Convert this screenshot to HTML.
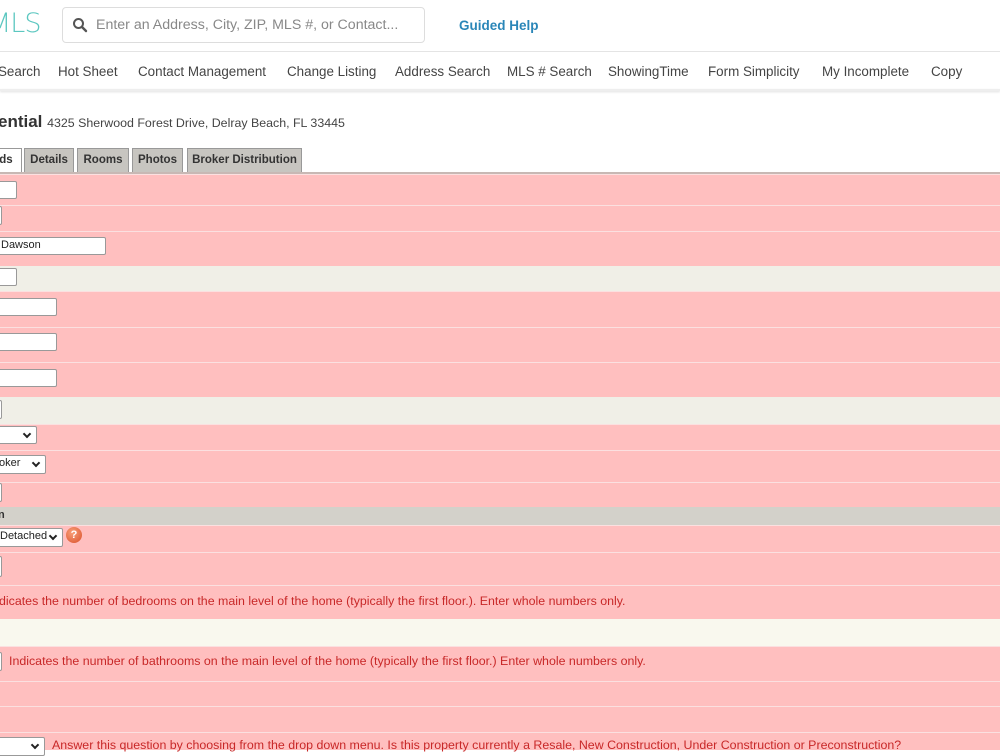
<!DOCTYPE html>
<html><head><style>
body{margin:0;width:1000px;height:750px;overflow:hidden;background:#fff;font-family:"Liberation Sans",sans-serif;position:relative}
.a{position:absolute}
.nav{font-family:"Liberation Sans",sans-serif;font-size:13.4px;color:#444;top:64px}
.row{position:absolute;left:0;width:1000px;background:#ffbfbf;border-top:1px solid #fbe0e0;box-sizing:border-box}
.inp{position:absolute;left:-4px;background:#fff;border:1px solid #999;border-radius:2px;box-sizing:border-box;font-size:11px;font-family:"Liberation Sans",sans-serif;color:#222;line-height:15px}
.sel:after{content:"";position:absolute;right:6px;top:4px;width:4px;height:4px;border-right:2px solid #222;border-bottom:2px solid #222;transform:rotate(45deg)}
.red{position:absolute;color:#c82828;font-size:12.4px}
.tab{position:absolute;top:148px;height:24px;background:#c7c5c0;border:1px solid #999;border-bottom:none;box-sizing:border-box;font-size:11.5px;font-weight:bold;color:#333;line-height:22px;text-align:center}
</style></head><body>
<div class="a" style="left:-12px;top:8px;font-family:'DejaVu Sans',sans-serif;font-size:27px;font-weight:200;color:#5cc7c0;letter-spacing:-1px">MLS</div>
<div class="a" style="left:62px;top:7px;width:363px;height:36px;border:1px solid #ddd;border-radius:4px;box-sizing:border-box"></div>
<svg class="a" style="left:72px;top:17px" width="16" height="16" viewBox="0 0 16 16"><circle cx="6.5" cy="6.5" r="4.5" fill="none" stroke="#555" stroke-width="2"/><path d="M10 10l4 4" stroke="#555" stroke-width="2.4" stroke-linecap="round"/></svg>
<div class="a" style="left:96px;top:17px;font-family:'Liberation Sans',sans-serif;font-size:14.2px;color:#888">Enter an Address, City, ZIP, MLS #, or Contact...</div>
<div class="a" style="left:459px;top:18px;font-family:'Liberation Sans',sans-serif;font-size:13.5px;font-weight:bold;color:#2a86b8">Guided Help</div>
<div class="a" style="left:0;top:51px;width:1000px;height:1px;background:#e4e4e4"></div>
<div class="a" style="left:0;top:89px;width:1000px;height:2px;background:#eee;box-shadow:0 1px 2px #ddd"></div>
<div class="a nav" style="left:-2px">Search</div>
<div class="a nav" style="left:58px">Hot Sheet</div>
<div class="a nav" style="left:138px">Contact Management</div>
<div class="a nav" style="left:287px">Change Listing</div>
<div class="a nav" style="left:395px">Address Search</div>
<div class="a nav" style="left:507px">MLS # Search</div>
<div class="a nav" style="left:608px">ShowingTime</div>
<div class="a nav" style="left:708px">Form Simplicity</div>
<div class="a nav" style="left:822px">My Incomplete</div>
<div class="a nav" style="left:931px">Copy</div>
<div class="a" style="left:-2px;top:112px;font-size:17px;font-weight:bold;color:#333">ential <span style="font-size:12.4px;font-weight:normal;color:#444">4325 Sherwood Forest Drive, Delray Beach, FL 33445</span></div>
<div class="tab" style="left:-10px;width:32px;background:#fff">ds</div>
<div class="tab" style="left:24px;width:50px">Details</div>
<div class="tab" style="left:77px;width:52px">Rooms</div>
<div class="tab" style="left:132px;width:51px">Photos</div>
<div class="tab" style="left:187px;width:115px">Broker Distribution</div>
<div class="a" style="left:0;top:172px;width:1000px;height:2px;background:#c8b8b4"></div>

<div class="row" style="top:174px;height:31px"></div><div class="inp" style="top:181px;width:21px;height:18px"></div>
<div class="row" style="top:205px;height:26px"></div><div class="inp" style="top:206px;width:6px;height:19px"></div>
<div class="row" style="top:231px;height:35px"></div><div class="inp" style="top:237px;width:110px;height:18px;padding-left:4px">Dawson</div>
<div class="row" style="top:266px;height:25px;background:#f0efe7;border-top:none"></div><div class="inp" style="top:268px;width:21px;height:18px"></div>
<div class="row" style="top:291px;height:36px"></div><div class="inp" style="top:298px;width:61px;height:18px"></div>
<div class="row" style="top:327px;height:35px"></div><div class="inp" style="top:333px;width:61px;height:18px"></div>
<div class="row" style="top:362px;height:35px"></div><div class="inp" style="top:369px;width:61px;height:18px"></div>
<div class="row" style="top:397px;height:27px;background:#f0efe7;border-top:none"></div><div class="inp" style="top:400px;width:6px;height:19px"></div>
<div class="row" style="top:424px;height:26px"></div><div class="inp sel" style="top:426px;width:41px;height:18px"></div>
<div class="row" style="top:450px;height:32px"></div><div class="inp sel" style="top:455px;width:50px;height:19px;padding-left:2px">oker</div>
<div class="row" style="top:482px;height:25px"></div><div class="inp" style="top:483px;width:6px;height:19px"></div>
<div class="row" style="top:507px;height:18px;background:#d3d1ca;border-top:none"></div><div class="a" style="left:-2px;top:509px;font-size:11px;font-weight:bold;color:#333">n</div>
<div class="row" style="top:525px;height:27px"></div><div class="inp sel" style="top:528px;width:67px;height:19px;padding-left:3px">Detached</div>
<div class="a" style="left:66px;top:527px;width:16px;height:16px;border-radius:50%;background:radial-gradient(circle at 40% 35%,#f9a07a,#d9502a);color:#fff;font-size:11px;font-weight:bold;text-align:center;line-height:16px">?</div>
<div class="row" style="top:552px;height:33px"></div><div class="inp" style="top:556px;width:6px;height:21px"></div>
<div class="row" style="top:585px;height:34px"></div><div class="red" style="left:-1px;top:594px">dicates the number of bedrooms on the main level of the home (typically the first floor.). Enter whole numbers only.</div>
<div class="row" style="top:619px;height:27px;background:#f9f8ee;border-top:none"></div>
<div class="row" style="top:646px;height:35px"></div><div class="inp" style="top:652px;width:6px;height:19px"></div><div class="red" style="left:9px;top:654px">Indicates the number of bathrooms on the main level of the home (typically the first floor.) Enter whole numbers only.</div>
<div class="row" style="top:681px;height:25px"></div>
<div class="row" style="top:706px;height:26px"></div>
<div class="row" style="top:732px;height:18px"></div><div class="inp sel" style="top:737px;width:49px;height:19px"></div><div class="red" style="left:52px;top:738px">Answer this question by choosing from the drop down menu. Is this property currently a Resale, New Construction, Under Construction or Preconstruction?</div>
</body></html>
